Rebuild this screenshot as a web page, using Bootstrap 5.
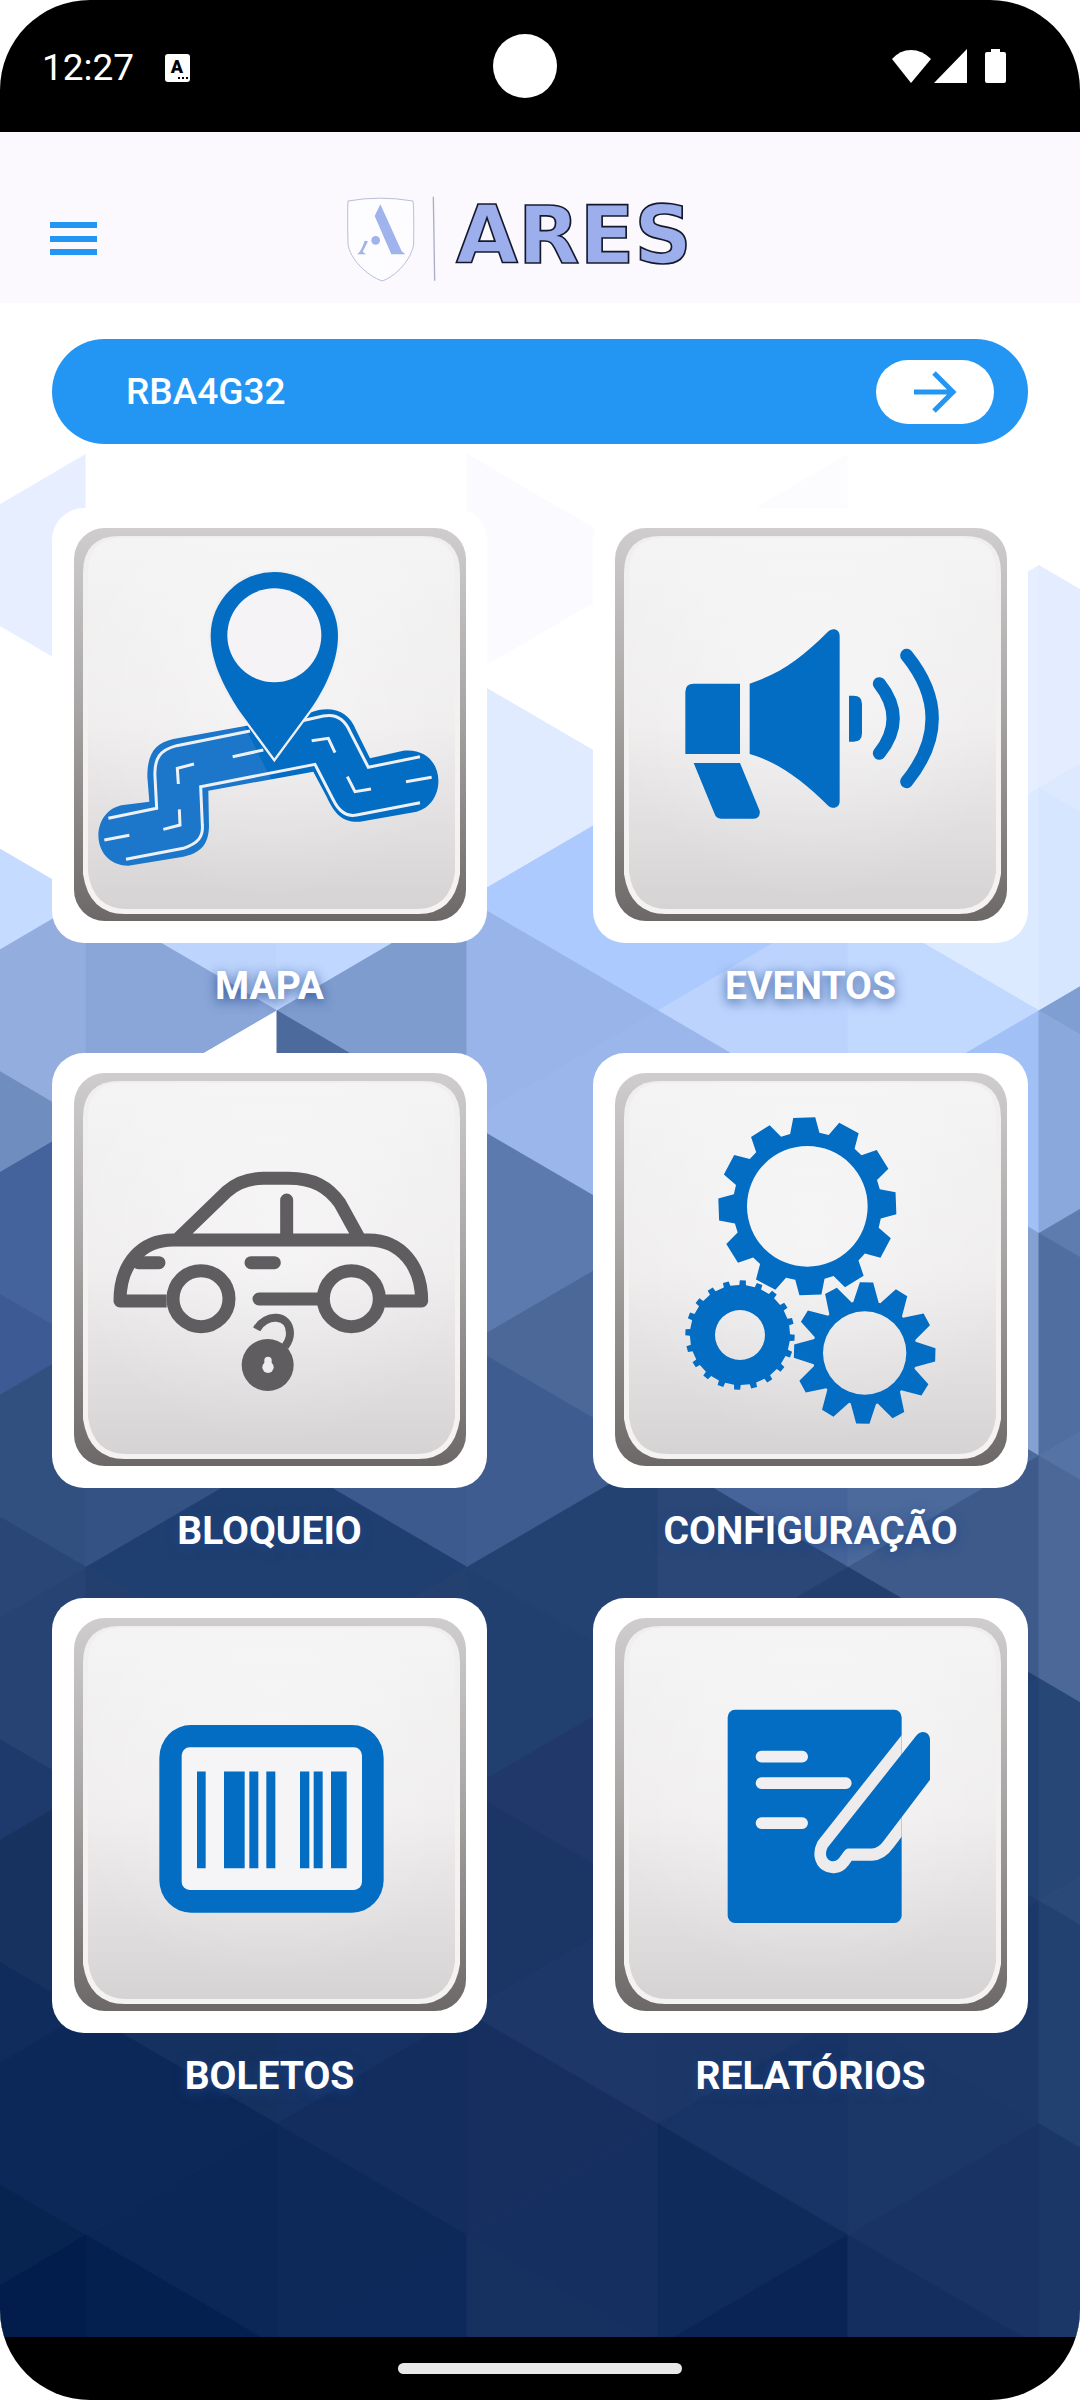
<!DOCTYPE html>
<html lang="pt-BR">
<head>
<meta charset="utf-8">
<meta name="viewport" content="width=device-width, initial-scale=1">
<title>ARES</title>
<link href="https://cdn.jsdelivr.net/npm/bootstrap@5.3.0/dist/css/bootstrap.min.css" rel="stylesheet">
<style>
  body { font-family: Roboto, "Noto Sans", sans-serif; background: #fff; }
  .phone { min-height: 100vh; border-radius: 90px; background: #000; }
  .status-bar { height: 132px; padding: 0 72px 0 42px; display: grid; grid-template-columns: 1fr auto 1fr; }
  .status-time { font-size: 37px; line-height: 44px; }
  .camera { width: 64px; height: 64px; }
  .app-bar { height: 171px; padding: 42px 48px 0; background: #fbf9fd; display: grid; grid-template-columns: 1fr auto 1fr; align-items: center; }
  .scene { isolation: isolate; background: #fff; padding: 36px 52px 0; }
  .mosaic { z-index: -1; }
  .plate-btn { height: 105px; padding: 0 34px 0 74px; background: #2396f4; font-size: 37px; font-weight: 500; margin-bottom: 64px; }
  .plate-btn:hover { background: #2396f4; }
  .plate-go { width: 118px; height: 64px; }
  .tiles { --bs-gutter-x: 106px; }
  .tile-face { aspect-ratio: 1; border-radius: 32px; }
  .tile-name { font-size: 39px; font-weight: 700; line-height: 46px; margin: 20px 0 44px; text-shadow: 0 3px 12px rgba(30, 70, 140, .85); }
  .system-nav { height: 63px; }
  .home-handle { width: 284px; height: 11px; background: #e9e9e9; }
</style>
</head>
<body>
<!-- shared tile art -->
<svg width="0" height="0" class="position-absolute" aria-hidden="true">
  <defs>
    <linearGradient id="rim" x1="0" y1="0" x2="0" y2="1"><stop offset="0" stop-color="#cfcdcd"/><stop offset=".45" stop-color="#a9a7a6"/><stop offset="1" stop-color="#6c6867"/></linearGradient>
    <linearGradient id="face" x1="0" y1="0" x2="0" y2="1"><stop offset="0" stop-color="#f4f4f5"/><stop offset=".5" stop-color="#efedee"/><stop offset="1" stop-color="#d5d3d4"/></linearGradient>
    <linearGradient id="lip" x1="0" y1="0" x2="0" y2="1"><stop offset="0" stop-color="#f0efef"/><stop offset="1" stop-color="#f5f3f2"/></linearGradient>
    <radialGradient id="sheen" cx=".5" cy=".42" r=".55"><stop offset="0" stop-color="#fff" stop-opacity=".4"/><stop offset="1" stop-color="#fff" stop-opacity="0"/></radialGradient>
    <linearGradient id="asphalt" gradientUnits="userSpaceOnUse" x1="590" y1="730" x2="670" y2="690"><stop offset=".5" stop-color="#1c76c9"/><stop offset=".5" stop-color="#036cc3"/></linearGradient>
    <clipPath id="sheet"><rect x="440" y="377" width="522" height="619" rx="22"/></clipPath>
    <symbol id="plate" viewBox="0 0 435 435">
      <rect x="22" y="20" width="392" height="393" rx="31" fill="url(#rim)"/>
      <path d="M31 65Q31 28 68 28H371Q408 28 408 65V366Q402 406 366 406H73Q37 406 31 366Z" fill="url(#lip)"/>
      <path d="M36 65Q36 30 70 30H369Q403 30 403 65V364Q398 401 364 401H75Q41 401 36 364Z" fill="url(#face)"/>
      <path d="M36 65Q36 30 70 30H369Q403 30 403 65V364Q398 401 364 401H75Q41 401 36 364Z" fill="url(#sheen)"/>
    </symbol>
  </defs>
</svg>

<div class="phone d-flex flex-column overflow-hidden">
  <div class="status-bar align-items-center text-white flex-shrink-0">
    <div class="d-flex align-items-center gap-4 pt-1">
      <span class="status-time">12:27</span>
      <svg width="40" height="30" viewBox="0 0 40 30" aria-hidden="true"><rect x="7" y="1" width="25" height="28" rx="3" fill="#fff"/><text x="19" y="20" text-anchor="middle" font-size="18" font-weight="900">A</text><path d="M20 25h2m2 0h2m2 0h2" stroke="#000" stroke-width="2"/></svg>
    </div>
    <div class="camera rounded-circle bg-white"></div>
    <svg class="ms-auto" width="118" height="36" viewBox="0 0 118 36" fill="#fff" aria-hidden="true">
      <path d="M21 35 2 11Q10 2 21 2T41 11Z"/><path d="M77 35H44L77 1Z"/><path d="M101 1h9v3h4q2 0 2 2v27q0 2-2 2H97q-2 0-2-2V6q0-2 2-2h4Z"/>
    </svg>
  </div>

  <header class="app-bar flex-shrink-0">
    <button type="button" class="btn border-0 p-0 text-start" aria-label="Menu">
      <svg class="d-block" width="52" height="36" viewBox="0 0 52 36" fill="#2396f4"><path d="M2 1h47v6H2zm0 14h47v6H2zm0 13h47v6H2z"/></svg>
    </button>
    <svg width="440" height="110" viewBox="0 10 1320 330" role="img" aria-label="ARES">
      <path d="M84 61Q180 44 279 61Q282 75 281 190C275 235 230 285 187 301C140 285 90 235 84 190Q82 100 84 61Z" fill="#fdfcff" stroke="#b9bfd8" stroke-width="3"/>
      <g fill="#9fb3ec"><path d="M181 71 245 212 256 221H214L164 106Z"/><circle cx="167" cy="179" r="13"/><path d="M134 180l10 2-16 31 10 8h-28q12-4 24-41Z"/></g>
      <path d="M340 48 344 300" stroke="#a9aec6" stroke-width="4"/>
      <text x="762" y="248" text-anchor="middle" font-family="DejaVu Sans, sans-serif" font-weight="700" font-size="240" fill="#9daeec" stroke="#14182a" stroke-width="5">ARES</text>
    </svg>
  </header>

  <main class="scene position-relative flex-grow-1">
    <svg id="mosaic" class="mosaic position-absolute top-0 start-0 w-100 h-100" viewBox="0 303 1080 2034" preserveAspectRatio="none" aria-hidden="true"></svg>

    <button type="button" class="plate-btn btn rounded-pill border-0 w-100 d-flex align-items-center justify-content-between text-white">
      <span>RBA4G32</span>
      <span class="plate-go bg-white rounded-pill d-flex align-items-center justify-content-center">
        <svg width="44" height="44" viewBox="0 0 44 44" fill="none" stroke="#2396f4" stroke-width="5"><path d="M1 22H40M21 3 40 22 21 41"/></svg>
      </span>
    </button>

    <div class="row tiles">
      <div class="col-6"><a href="#mapa" class="d-block text-decoration-none text-white text-center">
        <div class="tile-face bg-white overflow-hidden"><svg class="d-block w-100 h-100" viewBox="0 0 435 435" aria-hidden="true"><use href="#plate"/>
          <g transform="translate(-12 -8) scale(.33333)">
            <path fill="url(#asphalt)" d="M265 1097C148 1095 148 930 250 915L328 905 322 830C322 760 345 730 400 717L620 677 800 650 810 638C870 615 925 630 948 690L990 775 1090 752C1220 740 1225 910 1130 935L960 965C910 968 885 945 860 890L820 815 505 872 507 980C505 1040 475 1060 430 1070Z"/>
            <g fill="none" stroke="#edf1f6" stroke-width="9">
              <path d="M205 955 350 925 345 830C342 775 360 750 410 737L630 693M780 664 850 648C890 640 915 660 930 695L985 802 1140 770"/>
              <path d="M258 1078 430 1045C475 1030 490 1010 487 975L482 860 825 793 880 900C900 940 925 950 950 945L1140 908"/>
              <path d="M193 1020 268 1006M370 988 420 975 418 928M415 852 412 805 462 792M578 770 670 750M815 722 865 715 885 758M922 830 945 875 993 867M1098 845 1175 832"/>
            </g>
            <path d="M703 775 600 635C560 575 512 490 512 407A191 191 0 0 1 894 407C894 490 850 575 806 635Z" fill="#036cc3" stroke="#f1eff0" stroke-width="14" paint-order="stroke"/>
            <circle cx="703" cy="406" r="141" fill="#f5f3f5"/>
          </g></svg></div>
        <div class="tile-name">MAPA</div></a></div>

      <div class="col-6"><a href="#eventos" class="d-block text-decoration-none text-white text-center">
        <div class="tile-face bg-white overflow-hidden"><svg class="d-block w-100 h-100" viewBox="0 0 435 435" aria-hidden="true"><use href="#plate"/>
          <g transform="translate(-12 -8) scale(.33333)" fill="#036cc3">
            <path d="M477 551H338Q313 551 313 576V762H477ZM506 551C600 520 660 475 740 396 755 381 776 388 776 408V904C776 924 755 930 740 916 670 845 590 785 506 762ZM338 789H477L536 932Q539 956 518 956H420Q405 956 400 940ZM804 587H818Q843 587 843 612V700Q843 725 818 725H804Z"/>
            <path d="M895 551Q978 655 895 760M977 466Q1130 655 977 845" fill="none" stroke="#036cc3" stroke-width="39" stroke-linecap="round"/>
          </g></svg></div>
        <div class="tile-name">EVENTOS</div></a></div>

      <div class="col-6"><a href="#bloqueio" class="d-block text-decoration-none text-white text-center">
        <div class="tile-face bg-white overflow-hidden"><svg class="d-block w-100 h-100" viewBox="0 0 435 435" aria-hidden="true"><use href="#plate"/>
          <g transform="translate(-12 -13) scale(.33333)" fill="none" stroke="#5f5d60" stroke-width="39" stroke-linejoin="round">
            <path d="M380 783H240C240 670 305 600 400 600H985C1085 600 1145 680 1145 783H1035M415 595 560 455Q605 415 670 415H745C820 415 865 440 900 490L955 590"/>
            <path d="M740 480V590M295 668H357M633 668H703M657 777H840" stroke-linecap="round"/>
            <circle cx="483" cy="776" r="84"/><circle cx="934" cy="776" r="84"/>
            <path d="M650 868C675 820 750 820 750 880Q750 900 735 920" stroke-width="24"/>
            <circle cx="683" cy="975" r="78" fill="#5f5d60" stroke="none"/>
            <path d="M684 961V982" stroke="#eeecee" stroke-width="22" stroke-linecap="round"/><circle cx="684" cy="982" r="17" fill="#eeecee" stroke="none"/>
          </g></svg></div>
        <div class="tile-name">BLOQUEIO</div></a></div>

      <div class="col-6"><a href="#configuracao" class="d-block text-decoration-none text-white text-center">
        <div class="tile-face bg-white overflow-hidden"><svg class="d-block w-100 h-100" viewBox="0 0 435 435" aria-hidden="true"><use href="#plate"/>
          <g id="gears" transform="translate(-12 -13) scale(.33333)" fill="#036cc3" fill-rule="evenodd"></g></svg></div>
        <div class="tile-name">CONFIGURAÇÃO</div></a></div>

      <div class="col-6"><a href="#boletos" class="d-block text-decoration-none text-white text-center">
        <div class="tile-face bg-white overflow-hidden"><svg class="d-block w-100 h-100" viewBox="0 0 435 435" aria-hidden="true"><use href="#plate"/>
          <g transform="translate(-12 -18) scale(.33333 .34435)" fill="#036cc3">
            <rect x="358" y="421" width="673" height="545" rx="95"/><rect x="425" y="486" width="541" height="414" rx="24" fill="#f5f4f6"/>
            <path d="M471 556h26v281h-26zM552 556h62v281h-62zM628 556h27v281h-27zM679 556h27v281h-27zM780 556h28v281h-28zM821 556h27v281h-27zM873 556h47v281h-47z"/>
          </g></svg></div>
        <div class="tile-name">BOLETOS</div></a></div>

      <div class="col-6"><a href="#relatorios" class="d-block text-decoration-none text-white text-center">
        <div class="tile-face bg-white overflow-hidden"><svg class="d-block w-100 h-100" viewBox="0 0 435 435" aria-hidden="true"><use href="#plate"/>
          <g transform="translate(-12 -18) scale(.33333 .34435)" fill="#036cc3">
            <rect x="440" y="377" width="522" height="619" rx="22"/>
            <path d="M541 513H664M541 590H795M541 706H664" stroke="#f1eff1" stroke-width="34" stroke-linecap="round"/>
            <g clip-path="url(#sheet)"><path d="M1005 453C1020 433 1047 440 1047 464V580L910 755Q893 779 872 780H800Q794 781 786 792L774 808C758 828 722 812 740 777Z" stroke="#edebec" stroke-width="70" stroke-linejoin="round"/></g>
            <path d="M1005 453C1020 433 1047 440 1047 464V580L910 755Q893 779 872 780H800Q794 781 786 792L774 808C758 828 722 812 740 777Z"/>
          </g></svg></div>
        <div class="tile-name">RELATÓRIOS</div></a></div>
    </div>
  </main>

  <div class="system-nav flex-shrink-0 d-flex align-items-center justify-content-center"><span class="home-handle rounded-pill"></span></div>
</div>

<script src="https://cdn.jsdelivr.net/npm/bootstrap@5.3.0/dist/js/bootstrap.bundle.min.js"></script>
<script>
  const NS = 'http://www.w3.org/2000/svg';
  // Triangular mosaic: one colour list per column, top to bottom, half a triangle per step
  const xs = [-104, 86, 277, 467, 658, 848, 1039, 1229];
  const top0 = 343, half = 111.3;
  const cols = [
    'fff fff e6eeff fff fff c5dbff 93aede 6f8dbf 44629c 3d5a95 32507f 294676 264373 1e3a6d 17325f 102c5c 0c2858 07234f 021c4b',
    'fff fff fff fff fff bdd4fc 8aa6d8 fff 44629c 3d5a95 345384 1f3f70 223f6e 1e3a6d 17325f 15315f 0c2859 0b2757 04204f',
    'fff fff fff fff fff c0d8ff 7e9cce 4c6a9c 44629c 3d5a95 3c5a8d 1f3f70 23406f 1e3a6d 17325f 163264 122d5e 0d2959 0d295c',
    'fff fff fbfbff fff e0ebff adcaff 98b4e8 9ab6ea 5d7aae 4b6899 3f5c90 234272 22406f 20396a 1b3665 1d3868 162f5f 152f60 16305f',
    'fff fff fcfcff fff fff adcaff bcd4fd 9ab6ea 5d7aae 4b6899 46649a 2a4777 223f6e 20396a 1b3665 1c3767 183365 0f2b5b 0a2455',
    'fff fff fff e6efff e6efff dceaff c1d8ff a0c0f6 85a1d2 85a1d2 4c6a9c 3d5a8b 233f6e 224273 1f3b6b 1c3868 1b3767 183364 142e60',
    'fff fff fff e4edff dde9ff d7e6ff 7f9fd2 8ba8dc 5f7cae 506fa0 5573a4 4b6899 4b6899 274777 2a4878 224070 224070 1b3768 1b3768'
  ];
  const mosaic = document.getElementById('mosaic');
  cols.forEach((list, c) => list.split(' ').forEach((hex, j) => {
    const apexLeft = (c + j) % 2 === 0;
    const ax = apexLeft ? xs[c] : xs[c + 1], bx = apexLeft ? xs[c + 1] : xs[c];
    const m = top0 + half * j;
    const p = document.createElementNS(NS, 'polygon');
    p.setAttribute('points', `${ax},${m} ${bx},${m - half} ${bx},${m + half}`);
    p.setAttribute('fill', '#' + hex);
    p.setAttribute('stroke', '#' + hex);
    mosaic.appendChild(p);
  }));

  // Gears: centre, hole radius, root radius, tip radius, teeth, turn, half widths at root and tip
  [[679, 499, 181, 219, 266, 12, -2, 44, 33],
   [851, 939, 125, 152, 212, 12, 1.5, 38, 20],
   [477, 885, 75, 150, 164, 20, 3, 10, 9]].forEach(([cx, cy, hole, root, tip, n, turn, wr, wt]) => {
    let d = '';
    for (let i = 0; i < n; i++) {
      const a = (turn + i * 360 / n) * Math.PI / 180;
      [[-wr, root], [-wt, tip], [wt, tip], [wr, root]].forEach(([u, r]) => {
        const x = cx + u * Math.cos(a) + r * Math.sin(a), y = cy + u * Math.sin(a) - r * Math.cos(a);
        d += (d ? 'L' : 'M') + x.toFixed(1) + ' ' + y.toFixed(1);
      });
    }
    d += `ZM${cx - hole} ${cy}a${hole} ${hole} 0 1 0 ${2 * hole} 0a${hole} ${hole} 0 1 0 ${-2 * hole} 0Z`;
    const p = document.createElementNS(NS, 'path');
    p.setAttribute('d', d);
    document.getElementById('gears').appendChild(p);
  });
</script>
</body>
</html>
